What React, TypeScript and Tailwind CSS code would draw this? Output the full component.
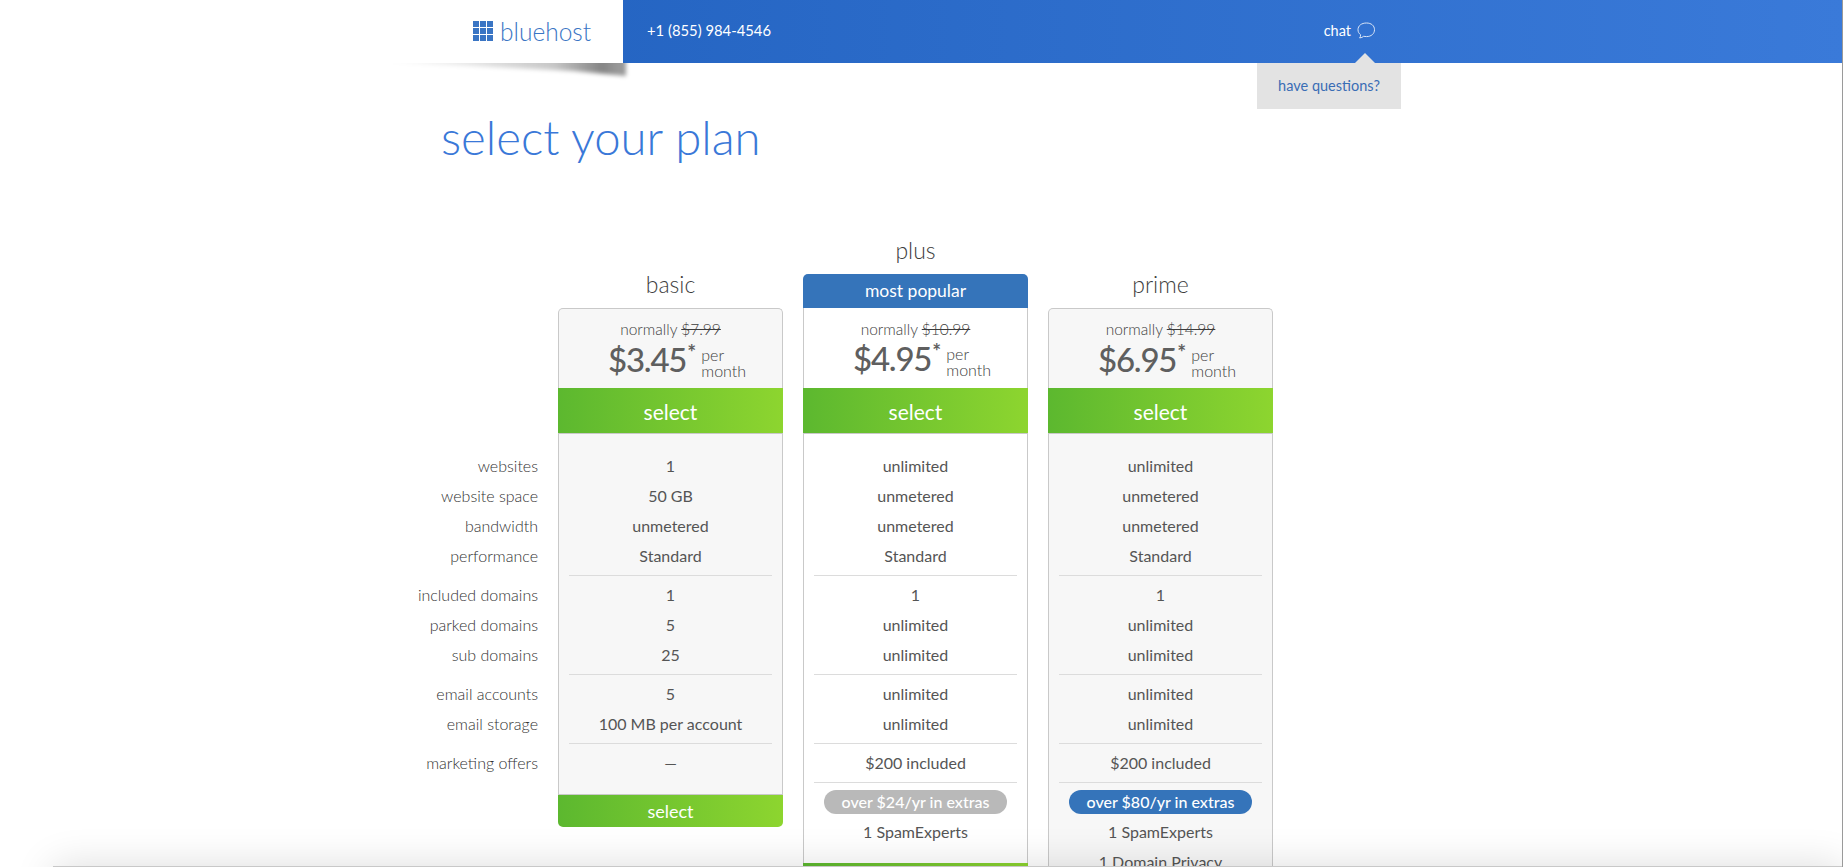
import React from "react";

const font = { fontFamily: '"Lato", "Open Sans", sans-serif' };

type Plan = {
  name: string;
  was: string;
  price: string;
  white?: boolean;
  popular?: boolean;
  groups: string[][];
  offset: string;
};

const labels = [
  ["websites", "website space", "bandwidth", "performance"],
  ["included domains", "parked domains", "sub domains"],
  ["email accounts", "email storage"],
  ["marketing offers"],
];

const plans: Plan[] = [
  {
    name: "basic",
    was: "$7.99",
    price: "$3.45",
    offset: "pt-[34px]",
    groups: [
      ["1", "50 GB", "unmetered", "Standard"],
      ["1", "5", "25"],
      ["5", "100 MB per account"],
      ["—"],
    ],
  },
  {
    name: "plus",
    was: "$10.99",
    price: "$4.95",
    white: true,
    popular: true,
    offset: "pt-0",
    groups: [
      ["unlimited", "unmetered", "unmetered", "Standard"],
      ["1", "unlimited", "unlimited"],
      ["unlimited", "unlimited"],
      ["$200 included"],
    ],
  },
  {
    name: "prime",
    was: "$14.99",
    price: "$6.95",
    offset: "pt-[34px]",
    groups: [
      ["unlimited", "unmetered", "unmetered", "Standard"],
      ["1", "unlimited", "unlimited"],
      ["unlimited", "unlimited"],
      ["$200 included"],
    ],
  },
];

function Row({ children }: { children: React.ReactNode }) {
  return <div className="h-[30px] leading-[30px]">{children}</div>;
}

function PlanCard({ plan }: { plan: Plan }) {
  const bg = plan.white ? "bg-white" : "bg-[#f7f7f7]";
  const isBasic = plan.name === "basic";
  return (
    <div className={`w-[225px] ml-[20px] shrink-0 ${plan.offset}`}>
      <div className="h-[36px] leading-[33px] text-center text-[23px] font-light text-[#3d3d3d]">{plan.name}</div>
      <div className="h-[4px]" />
      {plan.popular && (
        <div className="h-[34px] leading-[33px] rounded-t-[5px] bg-[#3574ba] text-center text-[17.5px] text-white">
          most popular
        </div>
      )}
      <div
        className={`h-[80px] border-x border-[#c9c9c9] ${bg} text-center text-[#666] ${
          plan.popular ? "" : "border-t rounded-t-[5px]"
        }`}
      >
        <div className={`${plan.popular ? "pt-[11px]" : "pt-[10px]"} h-[30px] leading-[21px] text-[15.5px] font-light text-[#3d3d3d]`}>
          normally <span className="line-through">{plan.was}</span>
        </div>
        <div className="flex justify-center items-start pl-[13px]">
          <span className="text-[33px] leading-[40px] tracking-[-1.2px] font-medium text-[#5f5f5f]">{plan.price}</span>
          <span className="text-[21px] leading-[26px] font-bold text-[#5f5f5f] ml-[1px] mr-[5px]">*</span>
          <span className="text-left text-[16px] leading-[16px] font-light text-[#3d3d3d] pt-[8px]">
            per
            <br />
            month
          </span>
        </div>
      </div>
      <div className="h-[46px] leading-[47px] text-center text-[21px] text-white bg-gradient-to-r from-[#5cb82f] to-[#8dd52f] border-b border-[#c9c9c9]">
        select
      </div>
      <div className={`border-x border-[#c9c9c9] ${bg} text-center text-[16px] text-[#555] px-[10px] pt-[17px] ${isBasic ? "" : "pb-[60px]"}`}>
        {plan.groups.map((g, i) => (
          <div key={i} className={i === 0 ? "pb-[4px]" : "border-t border-[#dcdcdc] py-[4px]"}>
            {g.map((v, j) => (
              <Row key={j}>{v}</Row>
            ))}
          </div>
        ))}
        {isBasic && <div className="h-[12px]" />}
        {!isBasic && (
          <div className="border-t border-[#dcdcdc] pt-[7px]">
            <div
              className={`mx-auto h-[24px] leading-[24px] rounded-full text-white text-[16px] font-medium w-[183px] ${
                plan.name === "plus" ? "bg-[#b9b9b9]" : "bg-[#3574ba]"
              }`}
            >
              {plan.name === "plus" ? "over $24/yr in extras" : "over $80/yr in extras"}
            </div>
            <div className="mt-[3px]">
              <Row>1 SpamExperts</Row>
              {plan.name === "prime" && <Row>1 Domain Privacy</Row>}
            </div>
            {plan.name === "plus" && <div className="h-[16px]" />}
          </div>
        )}
      </div>
      {isBasic ? (
        <div className="h-[33px] leading-[33px] rounded-b-[5px] text-center text-[18px] text-white bg-gradient-to-r from-[#5cb82f] to-[#8dd52f] border-t border-[#c9c9c9]">
          select
        </div>
      ) : (
        <div className="h-[46px] bg-gradient-to-r from-[#5cb82f] to-[#8dd52f] -mt-[60px] relative" />
      )}
    </div>
  );
}

export default function App() {
  return (
    <div className="relative h-[867px] w-full overflow-hidden bg-white" style={font}>
      <svg className="absolute left-[383px] top-[56px]" width="252" height="26" viewBox="0 0 252 26">
        <defs>
          <linearGradient id="sh" x1="0" x2="1" y1="0" y2="0">
            <stop offset="0" stopColor="#000" stopOpacity="0.02" />
            <stop offset="0.35" stopColor="#000" stopOpacity="0.1" />
            <stop offset="0.7" stopColor="#000" stopOpacity="0.22" />
            <stop offset="0.9" stopColor="#000" stopOpacity="0.48" />
            <stop offset="0.97" stopColor="#000" stopOpacity="0.4" />
          </linearGradient>
          <filter id="bl" x="-5%" y="-50%" width="110%" height="200%">
            <feGaussianBlur stdDeviation="2" />
          </filter>
        </defs>
        <polygon points="2,6 243,0 243,20 190,15 90,10" fill="url(#sh)" filter="url(#bl)" />
      </svg>

      <header className="relative flex h-[63px] bg-gradient-to-r from-[#1a5bb8] to-[#3a7ad9]">
        <div className="relative w-[623px] h-full bg-white flex items-center pl-[473px] shrink-0">
          <svg width="20" height="20" viewBox="0 0 20 20" className="mr-[7px] mt-[-2px]" fill="#3a75c4">
            {[0, 7, 14].map((y) =>
              [0, 7, 14].map((x) => <rect key={`${x}-${y}`} x={x} y={y} width="6" height="6" />)
            )}
          </svg>
          <span className="text-[24.5px] font-light text-[#3a75c4] leading-none mt-[1px]">bluehost</span>
        </div>
        <div className="ml-[24px] leading-[61px] text-[14.8px] text-white">+1 (855) 984-4546</div>
        <div className="ml-auto mr-[467px] flex items-center gap-[5px] text-[14.5px] text-white h-[61px] relative">
          <span>chat</span>
          <svg width="20" height="18" viewBox="0 0 20 18" fill="none" stroke="#dbe6f7" strokeWidth="1">
            <path d="M10.5 1C5.5 1 2 3.7 2 7.7c0 2.2 1 3.900 2.600 5 .1 1.300-.3 2.400-1 3.200 1.700-.1 3.100-.6 4-1.600.9.2 1.900.3 2.900.3 4.800 0 8-2.900 8-6.900S15.300 1 10.500 1z" />
          </svg>
        </div>
      </header>

      <div className="absolute left-[1257px] top-[63px] w-[144px] h-[46px] bg-[#e3e3e3] text-center leading-[46px] text-[14.5px] text-[#3a6db5]">
        have questions?
        <div className="absolute left-[98px] top-[-10px] w-0 h-0 border-x-[10px] border-x-transparent border-b-[10px] border-b-[#e3e3e3]" />
      </div>

      <h1 className="pl-[441px] pt-[44px] h-[170px] text-[47.3px] leading-[60px] font-light text-[#3a78d8]">
        select your plan
      </h1>

      <div className="flex items-start">
        <div className="w-[538px] shrink-0 pt-[218px] text-right text-[16px] font-light text-[#333]">
          {labels.map((g, i) => (
            <div key={i} className={i === 0 ? "pb-[4px]" : "pt-[5px] pb-[4px]"}>
              {g.map((l) => (
                <Row key={l}>{l}</Row>
              ))}
            </div>
          ))}
        </div>
        {plans.map((p) => (
          <div key={p.name} className="mt-[1px]">
            <PlanCard plan={p} />
          </div>
        ))}
      </div>

      <div className="absolute left-[53px] right-0 top-[866px] h-[60px] bg-[#c8c8c8] shadow-[0_0_40px_rgba(0,0,0,0.14)]" />
      <div className="absolute right-0 top-0 bottom-0 w-px bg-[#9a9a9a]" />
    </div>
  );
}
